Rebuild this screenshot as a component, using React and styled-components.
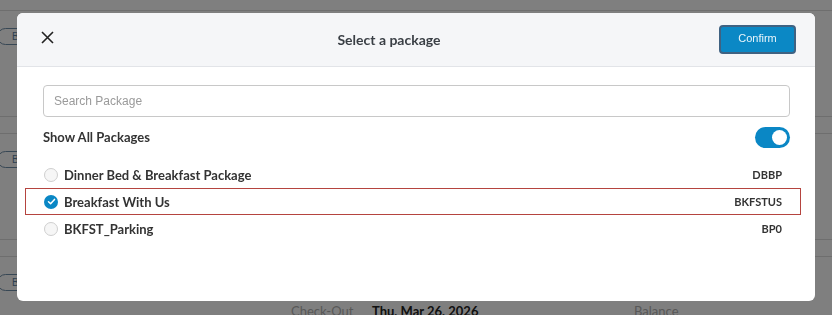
import React, { useState } from 'react'
import styled, { createGlobalStyle } from 'styled-components'

const GlobalStyle = createGlobalStyle`
  html, body {
    margin: 0;
    padding: 0;
    background: #fff;
    font-family: Lato, "Noto Sans", sans-serif;
  }
`

// background page (under the overlay)
const Page = styled.div`
  padding-top: 10px;
  display: flex;
  flex-direction: column;
  gap: 16px;
  height: 315px;
  overflow: hidden;
  box-sizing: border-box;
`

const Block = styled.div`
  flex-shrink: 0;
  height: 107px;
  box-sizing: border-box;
  border-top: 1px solid #dcdcdc;
  border-bottom: 1px solid #dcdcdc;
  padding-top: 17px;
`

const Pill = styled.div`
  width: 60px;
  height: 17px;
  margin-left: -3px;
  border: 1px solid #6f8ea8;
  border-radius: 9px;
  font-family: 'Liberation Sans', Arial, sans-serif;
  font-size: 10px;
  color: #5b7f9f;
  display: flex;
  align-items: center;
  padding-left: 14px;
  box-sizing: border-box;
`

const InfoRow = styled.div`
  display: flex;
  align-items: center;
  margin-top: 12px;
  padding-left: 291px;
  font-size: 13px;
`

const InfoLabel = styled.span`
  color: #b0b0b0;
  width: 81px;
`

const InfoValue = styled.span`
  color: #222;
  font-weight: 700;
  width: 262px;
`

const Overlay = styled.div`
  position: fixed;
  inset: 0;
  background: rgba(0, 0, 0, 0.5);
  padding: 13px 17px 14px;
  box-sizing: border-box;
`

const Modal = styled.div`
  height: 288px;
  background: #fff;
  border-radius: 6px;
  overflow: hidden;
  display: flex;
  flex-direction: column;
`

const Header = styled.div`
  height: 54px;
  box-sizing: border-box;
  background: #f5f6f8;
  border-bottom: 1px solid #e2e4e8;
  display: flex;
  align-items: center;
  padding: 0 19px 1px 18px;
`

const CloseButton = styled.button`
  width: 24px;
  height: 24px;
  padding: 0;
  border: 0;
  background: none;
  display: flex;
  align-items: center;
  justify-content: center;
  margin-top: -4px;
  color: #222;
`

const Title = styled.div`
  flex: 1;
  text-align: center;
  font-size: 14px;
  font-weight: 700;
  color: #3a3f45;
  padding-top: 1px;
`

const ConfirmButton = styled.button`
  width: 77px;
  height: 29px;
  box-sizing: border-box;
  background: #0b88c5;
  border: 2px solid #3f6282;
  border-radius: 4px;
  color: #e9f5fb;
  font-family: 'Liberation Sans', Arial, sans-serif;
  font-size: 11px;
  padding: 0 0 2px;
`

const Body = styled.div`
  padding: 18px 25px 0 26px;
  display: flex;
  flex-direction: column;
`

const SearchInput = styled.input`
  height: 32px;
  box-sizing: border-box;
  border: 1px solid #c8c8c8;
  border-radius: 4px;
  padding: 0 10px;
  font-family: 'Liberation Sans', Arial, sans-serif;
  font-size: 12px;
  color: #333;
  outline: none;
  &::placeholder {
    color: #9a9a9a;
  }
`

const ToggleRow = styled.div`
  display: flex;
  align-items: center;
  justify-content: space-between;
  margin-top: 10px;
  height: 21px;
`

const ToggleLabel = styled.span`
  font-size: 13px;
  font-weight: 700;
  color: #333;
  margin-top: -2px;
`

const Toggle = styled.div`
  width: 35px;
  height: 21px;
  border-radius: 11px;
  background: ${({ on }) => (on ? '#0a87c5' : '#ccc')};
  display: flex;
  align-items: center;
  justify-content: ${({ on }) => (on ? 'flex-end' : 'flex-start')};
  padding: 0 3px;
  box-sizing: border-box;
  cursor: pointer;
`

const Knob = styled.div`
  width: 15px;
  height: 15px;
  border-radius: 50%;
  background: #fff;
`

const List = styled.div`
  margin: 13px -11px 0 -18px;
  display: flex;
  flex-direction: column;
`

const Row = styled.div`
  height: 27px;
  box-sizing: border-box;
  border: 1px solid ${({ selected }) => (selected ? '#b5443f' : 'transparent')};
  display: flex;
  align-items: center;
  padding: 0 18px;
  cursor: pointer;
`

const Radio = styled.span`
  width: 14px;
  height: 14px;
  border-radius: 50%;
  box-sizing: border-box;
  border: ${({ checked }) => (checked ? 'none' : '1px solid #cfcfcf')};
  background: ${({ checked }) => (checked ? '#0a87c5' : '#f6f6f6')};
  display: flex;
  align-items: center;
  justify-content: center;
  margin-right: 6px;
  flex-shrink: 0;
`

const Name = styled.span`
  flex: 1;
  font-size: 13px;
  font-weight: 700;
  color: #333;
`

const Code = styled.span`
  font-size: 11px;
  font-weight: 700;
  color: #333;
`

const packages = [
  { name: 'Dinner Bed & Breakfast Package', code: 'DBBP' },
  { name: 'Breakfast With Us', code: 'BKFSTUS' },
  { name: 'BKFST_Parking', code: 'BP0' },
]

const App = () => {
  const [selected, setSelected] = useState(1)
  const [showAll, setShowAll] = useState(true)

  return (
    <>
      <GlobalStyle />
      <Page>
        <Block>
          <Pill>Bo</Pill>
        </Block>
        <Block>
          <Pill>Bo</Pill>
        </Block>
        <Block>
          <Pill>Bo</Pill>
          <InfoRow>
            <InfoLabel>Check-Out</InfoLabel>
            <InfoValue>Thu, Mar 26, 2026</InfoValue>
            <InfoLabel>Balance</InfoLabel>
          </InfoRow>
        </Block>
      </Page>

      <Overlay>
        <Modal>
          <Header>
            <CloseButton aria-label="Close">
              <svg width="13" height="13" viewBox="0 0 13 13">
                <path d="M1 1 L12 12 M12 1 L1 12" stroke="#222" strokeWidth="1.6" fill="none" />
              </svg>
            </CloseButton>
            <Title>Select a package</Title>
            <ConfirmButton>Confirm</ConfirmButton>
          </Header>
          <Body>
            <SearchInput placeholder="Search Package" />
            <ToggleRow>
              <ToggleLabel>Show All Packages</ToggleLabel>
              <Toggle on={showAll ? 1 : 0} onClick={() => setShowAll(!showAll)}>
                <Knob />
              </Toggle>
            </ToggleRow>
            <List>
              {packages.map((p, i) => (
                <Row key={p.code} selected={i === selected} onClick={() => setSelected(i)}>
                  <Radio checked={i === selected}>
                    {i === selected && (
                      <svg width="9" height="9" viewBox="0 0 9 9">
                        <path d="M1.5 4.8 L3.6 6.8 L7.5 2.4" stroke="#fff" strokeWidth="1.5" fill="none" strokeLinecap="round" strokeLinejoin="round" />
                      </svg>
                    )}
                  </Radio>
                  <Name>{p.name}</Name>
                  <Code>{p.code}</Code>
                </Row>
              ))}
            </List>
          </Body>
        </Modal>
      </Overlay>
    </>
  )
}

export default App
